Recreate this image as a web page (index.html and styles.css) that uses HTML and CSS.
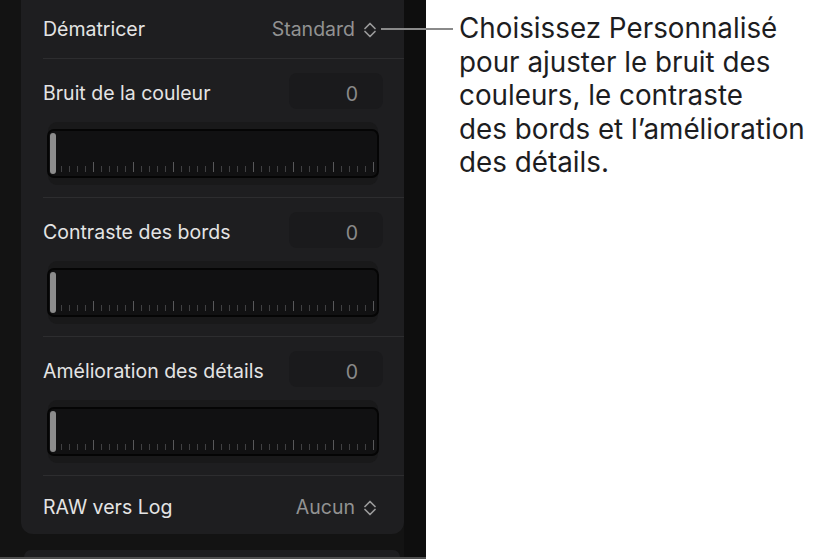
FILE: index.html
```html
<!DOCTYPE html>
<html lang="fr">
<head>
<meta charset="utf-8">
<title>Dématricer</title>
<link rel="stylesheet" href="styles.css">
</head>
<body>
<div class="app">
  <aside class="sidebar">
    <div class="sidebar-main">
      <div class="col">
        <section class="panel">
          <div class="row">
            <span class="label">Dématricer</span>
            <span class="popup">Standard
              <svg class="chev" width="14" height="18" viewBox="0 0 14 18"><path d="M2 7.5 L7 2.5 L12 7.5 M2 10.5 L7 15.5 L12 10.5" fill="none" stroke="#9a9a9a" stroke-width="1.7" stroke-linecap="round" stroke-linejoin="round"/></svg>
            </span>
          </div>
          <div class="group">
            <div class="group-head"><span class="label">Bruit de la couleur</span><span class="value">0</span></div>
            <div class="slider"><div class="track"><span class="thumb"></span><div class="ticks"><i></i><i></i><i></i><i></i><b></b><i></i><i></i><i></i><i></i><b></b><i></i><i></i><i></i><i></i><b></b><i></i><i></i><i></i><i></i><b></b><i></i><i></i><i></i><i></i><b></b><i></i><i></i><i></i><i></i><b></b><i></i><i></i><i></i><i></i><b></b><i></i><i></i><i></i><i></i><b></b></div></div></div>
          </div>
          <div class="group">
            <div class="group-head"><span class="label">Contraste des bords</span><span class="value">0</span></div>
            <div class="slider"><div class="track"><span class="thumb"></span><div class="ticks"><i></i><i></i><i></i><i></i><b></b><i></i><i></i><i></i><i></i><b></b><i></i><i></i><i></i><i></i><b></b><i></i><i></i><i></i><i></i><b></b><i></i><i></i><i></i><i></i><b></b><i></i><i></i><i></i><i></i><b></b><i></i><i></i><i></i><i></i><b></b><i></i><i></i><i></i><i></i><b></b></div></div></div>
          </div>
          <div class="group">
            <div class="group-head"><span class="label">Amélioration des détails</span><span class="value">0</span></div>
            <div class="slider"><div class="track"><span class="thumb"></span><div class="ticks"><i></i><i></i><i></i><i></i><b></b><i></i><i></i><i></i><i></i><b></b><i></i><i></i><i></i><i></i><b></b><i></i><i></i><i></i><i></i><b></b><i></i><i></i><i></i><i></i><b></b><i></i><i></i><i></i><i></i><b></b><i></i><i></i><i></i><i></i><b></b><i></i><i></i><i></i><i></i><b></b></div></div></div>
          </div>
          <div class="row row-last">
            <span class="label">RAW vers Log</span>
            <span class="popup">Aucun
              <svg class="chev" width="14" height="18" viewBox="0 0 14 18"><path d="M2 7.5 L7 2.5 L12 7.5 M2 10.5 L7 15.5 L12 10.5" fill="none" stroke="#9a9a9a" stroke-width="1.7" stroke-linecap="round" stroke-linejoin="round"/></svg>
            </span>
          </div>
        </section>
        <section class="panel-next"></section>
      </div>
      <div class="strip"></div>
    </div>
    <div class="bottom-line"></div>
  </aside>
  <div class="callout">
    <p>Choisissez Personnalisé<br>pour ajuster le bruit des<br>couleurs, le contraste<br>des bords et l’amélioration<br>des détails.</p>
  </div>
  <div class="leader"></div>
</div>
</body>
</html>
```

FILE: styles.css
```css
html, body {
  margin: 0;
  padding: 0;
  width: 814px;
  height: 559px;
  overflow: hidden;
  background: #ffffff;
}

.app {
  position: relative;
  display: flex;
  width: 814px;
  height: 559px;
  font-family: Inter, "Noto Sans", "Liberation Sans", sans-serif;
}

.sidebar {
  width: 426px;
  height: 559px;
  display: flex;
  flex-direction: column;
  background: #131313;
}

.sidebar-main {
  flex: 1;
  display: flex;
  overflow: hidden;
}

.col {
  flex: 1;
  padding-left: 21px;
  display: flex;
  flex-direction: column;
}

.strip {
  width: 22px;
  background: #0e0e0e;
}

.bottom-line {
  height: 2px;
  background: #4e4e4e;
}

.panel {
  width: 383px;
  background: #1e1e20;
  border-radius: 0 0 12px 12px;
  padding-left: 22px;
  box-sizing: border-box;
}

.panel-next {
  margin-top: 16px;
  margin-left: 3px;
  width: 376px;
  height: 20px;
  background: #1e1e20;
  border-radius: 10px 10px 0 0;
}

.row {
  height: 58px;
  padding-right: 21px;
  display: flex;
  align-items: center;
  justify-content: space-between;
  border-bottom: 1px solid #2d2d2f;
}

.row-last {
  border-bottom: none;
  padding-top: 4px;
  box-sizing: border-box;
}

.label {
  font-size: 19.5px;
  color: #e4e4e4;
}

.popup {
  display: flex;
  align-items: center;
  gap: 8px;
  font-size: 19.5px;
  color: #929292;
  margin-right: 6px;
}

.chev {
  display: block;
  margin-top: 1px;
}

.group {
  padding: 14px 21px 12px 0;
  border-bottom: 1px solid #2d2d2f;
}

.group-head {
  height: 36px;
  display: flex;
  align-items: center;
  justify-content: space-between;
}

.group-head .label {
  margin-top: 4px;
}

.value {
  width: 94px;
  height: 36px;
  box-sizing: border-box;
  background: #1a1a1c;
  border-radius: 8px;
  text-align: right;
  padding-right: 25px;
  padding-top: 3px;
  line-height: 36px;
  font-size: 19.5px;
  color: #8a8a8a;
}

.slider {
  margin: 13px 5px 0 5px;
  height: 63px;
  box-sizing: border-box;
  padding: 7px 0;
  background: #19191a;
  border-radius: 9px;
}

.track {
  position: relative;
  margin: 0 -1px;
  height: 49px;
  box-sizing: border-box;
  border: 2px solid #050505;
  border-radius: 7px;
  background: #111112;
  display: flex;
  align-items: flex-end;
  padding: 0 4px 4px 12px;
}

.thumb {
  position: absolute;
  left: 1px;
  top: 2px;
  width: 6px;
  height: 41px;
  border-radius: 3px;
  background: #8c8c8c;
}

.ticks {
  display: flex;
  align-items: flex-end;
  gap: 7px;
}

.ticks i, .ticks b {
  display: block;
  width: 1px;
}

.ticks i {
  height: 6px;
  background: #404042;
}

.ticks b {
  height: 10px;
  background: #58585a;
}

.callout {
  flex: 1;
  padding: 12px 0 0 33px;
}

.callout p {
  margin: 0;
  font-size: 27.8px;
  line-height: 33.5px;
  color: #1d1d1f;
}

.leader {
  position: absolute;
  left: 381px;
  top: 28px;
  width: 72px;
  height: 2px;
  background: #8a8a8a;
}
```
